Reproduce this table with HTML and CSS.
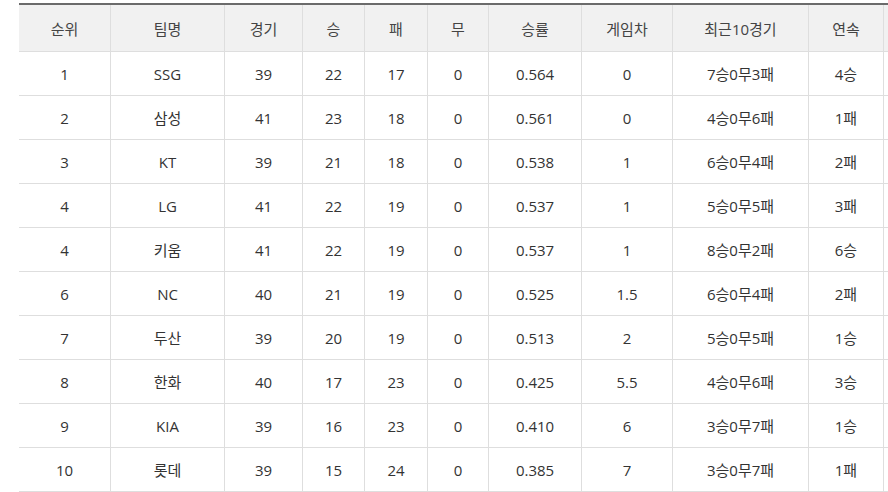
FILE: index.html
```html
<!DOCTYPE html>
<html lang="ko">
<head>
<meta charset="utf-8">
<title>순위</title>
<link rel="stylesheet" href="styles.css">
</head>
<body>
<div class="wrap">
  <div class="standings">
    <div class="row head">
      <div class="c">순위</div><div class="c">팀명</div><div class="c">경기</div><div class="c">승</div><div class="c">패</div><div class="c">무</div><div class="c">승률</div><div class="c">게임차</div><div class="c">최근10경기</div><div class="c">연속</div><div class="c"></div>
    </div>
    <div class="row"><div class="c">1</div><div class="c">SSG</div><div class="c">39</div><div class="c">22</div><div class="c">17</div><div class="c">0</div><div class="c">0.564</div><div class="c">0</div><div class="c">7승0무3패</div><div class="c">4승</div><div class="c"></div></div>
    <div class="row"><div class="c">2</div><div class="c">삼성</div><div class="c">41</div><div class="c">23</div><div class="c">18</div><div class="c">0</div><div class="c">0.561</div><div class="c">0</div><div class="c">4승0무6패</div><div class="c">1패</div><div class="c"></div></div>
    <div class="row"><div class="c">3</div><div class="c">KT</div><div class="c">39</div><div class="c">21</div><div class="c">18</div><div class="c">0</div><div class="c">0.538</div><div class="c">1</div><div class="c">6승0무4패</div><div class="c">2패</div><div class="c"></div></div>
    <div class="row"><div class="c">4</div><div class="c">LG</div><div class="c">41</div><div class="c">22</div><div class="c">19</div><div class="c">0</div><div class="c">0.537</div><div class="c">1</div><div class="c">5승0무5패</div><div class="c">3패</div><div class="c"></div></div>
    <div class="row"><div class="c">4</div><div class="c">키움</div><div class="c">41</div><div class="c">22</div><div class="c">19</div><div class="c">0</div><div class="c">0.537</div><div class="c">1</div><div class="c">8승0무2패</div><div class="c">6승</div><div class="c"></div></div>
    <div class="row"><div class="c">6</div><div class="c">NC</div><div class="c">40</div><div class="c">21</div><div class="c">19</div><div class="c">0</div><div class="c">0.525</div><div class="c">1.5</div><div class="c">6승0무4패</div><div class="c">2패</div><div class="c"></div></div>
    <div class="row"><div class="c">7</div><div class="c">두산</div><div class="c">39</div><div class="c">20</div><div class="c">19</div><div class="c">0</div><div class="c">0.513</div><div class="c">2</div><div class="c">5승0무5패</div><div class="c">1승</div><div class="c"></div></div>
    <div class="row"><div class="c">8</div><div class="c">한화</div><div class="c">40</div><div class="c">17</div><div class="c">23</div><div class="c">0</div><div class="c">0.425</div><div class="c">5.5</div><div class="c">4승0무6패</div><div class="c">3승</div><div class="c"></div></div>
    <div class="row"><div class="c">9</div><div class="c">KIA</div><div class="c">39</div><div class="c">16</div><div class="c">23</div><div class="c">0</div><div class="c">0.410</div><div class="c">6</div><div class="c">3승0무7패</div><div class="c">1승</div><div class="c"></div></div>
    <div class="row"><div class="c">10</div><div class="c">롯데</div><div class="c">39</div><div class="c">15</div><div class="c">24</div><div class="c">0</div><div class="c">0.385</div><div class="c">7</div><div class="c">3승0무7패</div><div class="c">1패</div><div class="c"></div></div>
  </div>
</div>
</body>
</html>
```

FILE: styles.css
```css
html, body {
  margin: 0;
  padding: 0;
  background: #fff;
  overflow: hidden;
}
body {
  padding: 3px 0 0 19px;
  font-family: "Open Sans", "Noto Sans CJK KR", sans-serif;
  font-size: 15px;
  color: #333;
}
.wrap {
  width: 869px;
  overflow: hidden;
}
.standings {
  width: 900px;
  border-top: 2px solid #6b6b6b;
}
.row {
  display: grid;
  grid-template-columns: 92px 114px 78px 62px 63px 61px 93px 91px 136px 75px 1fr;
  height: 44px;
}
.row.head {
  height: 47px;
  background: #f1f1f1;
  color: #444;
}
.c {
  box-sizing: border-box;
  border-right: 1px solid #dedede;
  border-bottom: 1px solid #dedede;
  display: flex;
  align-items: center;
  justify-content: center;
  white-space: nowrap;
}
```
